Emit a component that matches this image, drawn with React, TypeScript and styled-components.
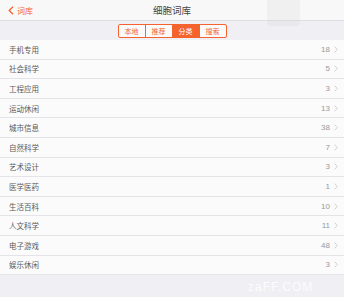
import styled, { createGlobalStyle } from "styled-components";

const GlobalStyle = createGlobalStyle`
	html, body {
		margin: 0;
		padding: 0;
		background: #efeff4;
	}
	body {
		font-family: "Noto Sans CJK SC", "Noto Sans", sans-serif;
	}
`;

const ORANGE = "#f4622d";

const categories = [
	{ name: "手机专用", count: 18 },
	{ name: "社会科学", count: 5 },
	{ name: "工程应用", count: 3 },
	{ name: "运动休闲", count: 13 },
	{ name: "城市信息", count: 38 },
	{ name: "自然科学", count: 7 },
	{ name: "艺术设计", count: 3 },
	{ name: "医学医药", count: 1 },
	{ name: "生活百科", count: 10 },
	{ name: "人文科学", count: 11 },
	{ name: "电子游戏", count: 48 },
	{ name: "娱乐休闲", count: 3 },
];

const tabs = ["本地", "推荐", "分类", "搜索"];

export default function App() {
	return (
		<Page>
			<GlobalStyle />
			<NavBar>
				<Back>
					<svg width="6" height="9" viewBox="0 0 6 9">
						<path d="M5 0.8 L1.2 4.5 L5 8.2" fill="none" stroke={ORANGE} strokeWidth="1.3" />
					</svg>
					<span>词库</span>
				</Back>
				<Title>细胞词库</Title>
				<Ghost />
			</NavBar>
			<SegmentBar>
				<Segments>
					{tabs.map((t) => (
						<Segment key={t} $active={t === "分类"}>
							{t}
						</Segment>
					))}
				</Segments>
			</SegmentBar>
			<List>
				{categories.map((c) => (
					<Row key={c.name}>
						<Label>{c.name}</Label>
						<Count>{c.count}</Count>
						<svg width="4" height="7" viewBox="0 0 4 7">
							<path d="M0.6 0.6 L3.3 3.5 L0.6 6.4" fill="none" stroke="#c8c8cc" strokeWidth="0.8" />
						</svg>
					</Row>
				))}
			</List>
			<Watermark>zaFF.COM</Watermark>
		</Page>
	);
}

const Page = styled.div`
	position: relative;
	width: 344px;
	height: 297px;
	overflow: hidden;
	background: #efeff4;
`;

const NavBar = styled.div`
	position: relative;
	height: 21px;
	background: #f8f8f8;
	border-bottom: 1px solid #dedee2;
	box-sizing: border-box;
	display: flex;
	align-items: center;
	justify-content: center;
`;

const Back = styled.div`
	position: absolute;
	left: 8px;
	top: 0;
	height: 21px;
	display: flex;
	align-items: center;
	gap: 3px;
	color: ${ORANGE};
	font-size: 8px;
`;

const Title = styled.div`
	font-size: 9.5px;
	color: #444;
`;

const Ghost = styled.div`
	position: absolute;
	left: 267px;
	top: 0;
	width: 33px;
	height: 26px;
	border-radius: 0 0 4px 4px;
	background: rgba(205, 205, 205, 0.18);
	z-index: 2;
`;

const SegmentBar = styled.div`
	height: 19px;
	display: flex;
	justify-content: center;
	align-items: flex-start;
	padding-top: 3px;
	box-sizing: border-box;
`;

const Segments = styled.div`
	display: flex;
	border: 1px solid ${ORANGE};
	border-radius: 2px;
	overflow: hidden;
	background: #fafafa;
`;

const Segment = styled.div<{ $active: boolean }>`
	width: 26px;
	height: 12px;
	display: flex;
	align-items: center;
	justify-content: center;
	font-size: 7px;
	color: ${(p) => (p.$active ? "#fff" : ORANGE)};
	background: ${(p) => (p.$active ? ORANGE : "transparent")};
	& + & {
		border-left: 1px solid ${ORANGE};
	}
`;

const List = styled.div`
	background: #fbfbfb;
`;

const Row = styled.div`
	height: 19.6px;
	box-sizing: border-box;
	display: flex;
	align-items: center;
	padding: 0 6px 0 9px;
	border-bottom: 0.6px solid #e4e4e8;
	gap: 4px;
`;

const Label = styled.div`
	flex: 1;
	font-size: 7.5px;
	color: #5a5a5a;
`;

const Count = styled.div`
	font-size: 8px;
	color: #999;
	font-family: "Liberation Sans", sans-serif;
`;

const Watermark = styled.div`
	position: absolute;
	left: 248px;
	top: 280px;
	font-size: 12px;
	letter-spacing: 1px;
	color: rgba(255, 255, 255, 0.85);
	font-family: "Liberation Sans", sans-serif;
`;
